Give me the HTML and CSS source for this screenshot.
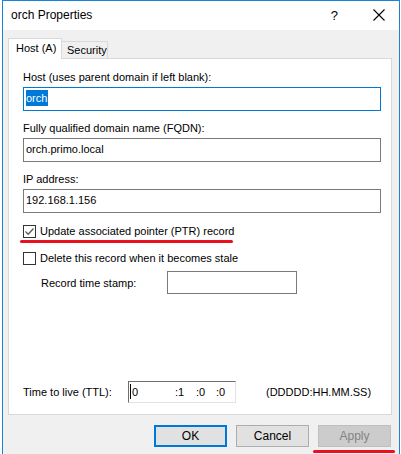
FILE: index.html
```html
<!DOCTYPE html>
<html>
<head>
<meta charset="utf-8">
<link rel="stylesheet" href="styles.css">
</head>
<body>
<div class="window">
  <div class="titlebar">
    <span class="title">orch Properties</span>
    <span class="help">?</span>
    <svg class="close" width="12" height="12" viewBox="0 0 12 12"><path d="M0.5 0.5 L11.5 11.5 M11.5 0.5 L0.5 11.5" stroke="#000" stroke-width="1.1" fill="none"/></svg>
  </div>
  <div class="client">
    <div class="tabs">
      <div class="tab active">Host (A)</div>
      <div class="tab">Security</div>
    </div>
    <div class="panel">
      <div class="field">
        <div class="label">Host (uses parent domain if left blank):</div>
        <div class="input focused"><span class="sel">orch</span></div>
      </div>
      <div class="field">
        <div class="label">Fully qualified domain name (FQDN):</div>
        <div class="input">orch.primo.local</div>
      </div>
      <div class="field">
        <div class="label">IP address:</div>
        <div class="input">192.168.1.156</div>
      </div>
      <div class="check first">
        <span class="box"><svg width="11" height="11" viewBox="0 0 11 11"><path d="M1.5 5.5 L4.2 8.2 L9.5 2.5" stroke="#5a5a5a" stroke-width="1.3" fill="none"/></svg></span>
        <span>Update associated pointer (PTR) record</span>
        <span class="redline ptr"></span>
      </div>
      <div class="check">
        <span class="box"></span>
        <span>Delete this record when it becomes stale</span>
      </div>
      <div class="stamp">
        <span class="stamp-label">Record time stamp:</span>
        <div class="input small"></div>
      </div>
      <div class="spacer"></div>
      <div class="ttl">
        <span class="ttl-label">Time to live (TTL):</span>
        <div class="ttl-input">
          <span class="caret"></span><span class="d">0</span><span class="h">:1</span><span class="m">:0</span><span class="s">:0</span>
        </div>
        <span class="ttl-fmt">(DDDDD:HH.MM.SS)</span>
      </div>
    </div>
    <div class="buttons">
      <div class="btn default">OK</div>
      <div class="btn">Cancel</div>
      <div class="btn disabled">Apply<span class="redline apply"></span></div>
    </div>
  </div>
</div>
</body>
</html>
```
FILE: styles.css
```css
html, body {
  margin: 0;
  padding: 0;
  background: #ffffff;
}
body {
  width: 401px;
  height: 454px;
  overflow: hidden;
  font-family: "Liberation Sans", Arial, sans-serif;
  font-size: 11px;
  color: #000;
}
.window {
  margin-left: 2px;
  width: 396px;
  height: 460px;
  border: 1px solid #1883d7;
  background: #f0f0f0;
}
.titlebar {
  height: 29px;
  background: #fff;
  display: flex;
  align-items: center;
}
.title {
  font-family: "Liberation Sans", Arial, sans-serif;
  font-size: 12px;
  margin-left: 8px;
  margin-top: -1px;
  flex: 1;
}
.help {
  font-family: "Liberation Sans", Arial, sans-serif;
  font-size: 13px;
  margin-right: 35px;
  margin-top: -1px;
}
.close {
  margin-right: 14px;
  margin-top: -1px;
}
.client {
  padding: 8px 7px 0 5px;
}
.tabs {
  display: flex;
  align-items: flex-end;
  height: 20px;
  position: relative;
  z-index: 2;
}
.tab {
  box-sizing: border-box;
  border: 1px solid #d9d9d9;
  border-bottom: none;
  background: #f0f0f0;
  height: 17px;
  padding: 0 0 0 5px;
  line-height: 17px;
  margin-left: -1px;
  width: 47px;
  white-space: nowrap;
}
.tab.active {
  background: #fff;
  height: 21px;
  width: 54px;
  margin-left: 0;
  margin-bottom: -1px;
  padding: 0 0 0 7px;
  line-height: 18px;
}
.panel {
  box-sizing: border-box;
  height: 357px;
  background: #fff;
  border: 1px solid #d9d9d9;
  padding: 11px 10px 0 14px;
  display: flex;
  flex-direction: column;
  position: relative;
}
.field {
  margin-bottom: 10px;
}
.label {
  height: 14px;
  line-height: 14px;
  margin-bottom: 3px;
}
.input {
  box-sizing: border-box;
  height: 24px;
  border: 1px solid #7a7a7a;
  background: #fff;
  padding: 0 2px;
  line-height: 21px;
  white-space: nowrap;
}
.input.focused {
  border-color: #0078d7;
}
.sel {
  background: #0078d7;
  color: #fff;
  display: inline-block;
  line-height: 16px;
  margin-top: 2px;
  padding-right: 1px;
}
.check {
  display: flex;
  align-items: center;
  height: 14px;
  position: relative;
  margin-bottom: 13px;
  white-space: nowrap;
}
.check.first {
  margin-top: 1px;
}
.box {
  box-sizing: border-box;
  width: 13px;
  height: 13px;
  border: 1px solid #333;
  background: #fff;
  margin-right: 4px;
  display: flex;
  align-items: center;
  justify-content: center;
}
.stamp {
  display: flex;
  align-items: center;
  padding-left: 18px;
  margin-top: -7px;
}
.stamp-label {
  width: 126px;
}
.input.small {
  width: 130px;
  height: 23px;
}
.spacer {
  flex: 1;
}
.ttl {
  display: flex;
  align-items: center;
  margin-bottom: 11px;
}
.ttl-label {
  width: 105px;
}
.ttl-input {
  box-sizing: border-box;
  width: 108px;
  height: 22px;
  border: 1px solid #e3e3e3;
  border-left-color: #6e6e6e;
  border-top-color: #6e6e6e;
  background: #fff;
  position: relative;
  line-height: 18px;
}
.ttl-input span {
  position: absolute;
  top: 1px;
}
.ttl-input .caret {
  left: 1px;
  top: 2px;
  width: 1px;
  height: 15px;
  background: #000;
}
.ttl-input .d { left: 3px; }
.ttl-input .h { left: 46px; }
.ttl-input .m { left: 67px; }
.ttl-input .s { left: 87px; }
.ttl-fmt {
  margin-left: 30px;
}
.buttons {
  display: flex;
  justify-content: flex-end;
  gap: 9px;
  padding: 10px 1px 0 0;
}
.btn {
  box-sizing: border-box;
  width: 73px;
  height: 22px;
  background: #e1e1e1;
  border: 1px solid #adadad;
  text-align: center;
  line-height: 20px;
  position: relative;
  font-size: 12px;
}
.btn.default {
  border: 2px solid #0078d7;
  line-height: 18px;
}
.btn.disabled {
  background: #cccccc;
  border-color: #bfbfbf;
  color: #838383;
}
.redline {
  position: absolute;
  height: 3px;
  border-radius: 2px;
  background: #e8111e;
}
.redline.ptr {
  left: -3px;
  top: 16px;
  width: 213px;
}
.redline.apply {
  left: -6px;
  top: 24px;
  width: 82px;
}
```
